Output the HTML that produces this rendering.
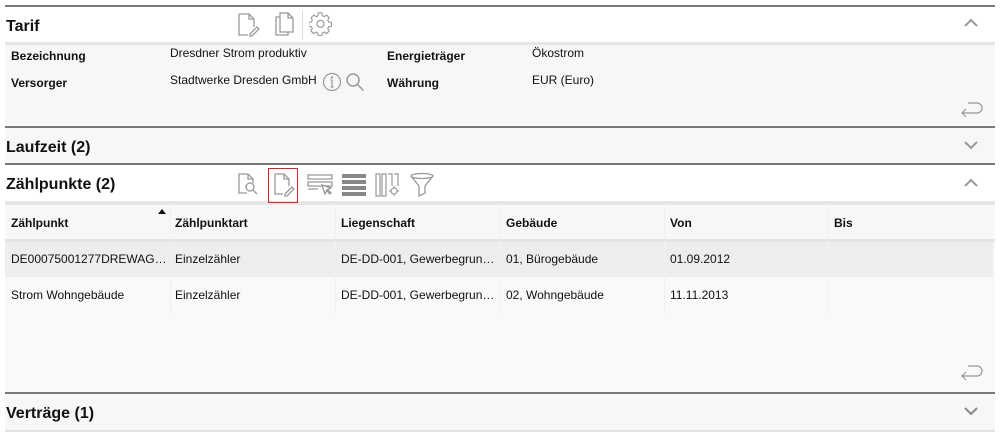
<!DOCTYPE html>
<html><head><meta charset="utf-8"><style>
*{margin:0;padding:0;box-sizing:border-box}
body{width:1000px;height:435px;background:#fff;font-family:"Liberation Sans",Arial,sans-serif;color:#111;position:relative;overflow:hidden}
.a{position:absolute}
.dl{position:absolute;left:5px;width:990px;height:2px;background:#777}
.h{position:absolute;left:5px;width:990px;font-weight:bold;font-size:16px}
.h span{position:absolute;left:1px}
.lbl{position:absolute;font-size:12px;font-weight:bold}
.val{position:absolute;font-size:12px}
.th{position:absolute;font-size:12px;font-weight:bold;top:216px}
.td{position:absolute;font-size:12px}
svg{position:absolute}
</style></head><body>
<div class="dl" style="top:5px"></div>
<div class="h" style="top:7px;height:36px;background:#fff"><span style="top:11px">Tarif</span></div>
<div class="a" style="left:5px;top:42px;width:990px;height:3px;background:#e6e6e6"></div>
<div class="a" style="left:5px;top:45px;width:990px;height:80px;background:#f7f7f7"></div>
<svg style="left:236px;top:12px" width="26" height="26" viewBox="0 0 26 26" fill="none" stroke="#999" stroke-width="1.3"><path d="M3 2h10l5 5v8M18 7h-5V2M3 2v21h9"/><path d="M14 22l7-7 2 2-7 7h-2z"/></svg>
<svg style="left:273px;top:11px" width="22" height="26" viewBox="0 0 22 26" fill="none" stroke="#999" stroke-width="1.3"><path d="M7 2h8l5 5v14H7z M15 2v5h5 M7 6H3v18h12v-3"/></svg>
<div class="a" style="left:302px;top:11px;width:1px;height:29px;background:#ddd"></div>
<svg style="left:309px;top:12px" width="24" height="24" viewBox="0 0 24 24" fill="none" stroke="#999" stroke-width="1.2"><path d="M10 2h4l.6 3 2 1 2.6-1.6 2.8 2.8L20.4 9.8l1 2 3 .6v4l-3 .6-1 2 1.6 2.6-2.8 2.8-2.6-1.6-2 1-.6 3h-4l-.6-3-2-1-2.6 1.6-2.8-2.8 1.6-2.6-1-2-3-.6v-4l3-.6 1-2L2.4 7.2l2.8-2.8L7.8 6l2-1z" transform="scale(.92) translate(0,-1)"/><circle cx="11.5" cy="11.8" r="3.5"/></svg>
<svg style="left:964px;top:18px" width="14" height="10" viewBox="0 0 14 10" fill="none" stroke="#999" stroke-width="2"><path d="M1 8l6-6 6 6"/></svg>
<div class="lbl" style="left:11px;top:49px">Bezeichnung</div>
<div class="val" style="left:170px;top:46px">Dresdner Strom produktiv</div>
<div class="lbl" style="left:387px;top:49px">Energieträger</div>
<div class="val" style="left:532px;top:46px">Ökostrom</div>
<div class="lbl" style="left:11px;top:76px">Versorger</div>
<div class="val" style="left:170px;top:73px">Stadtwerke Dresden GmbH</div>
<svg style="left:322px;top:72px" width="20" height="20" viewBox="0 0 20 20" fill="none" stroke="#999" stroke-width="1.2"><circle cx="10" cy="10" r="8.5"/><path d="M10 8v7M8.5 15h3M8.5 8h1.5"/><circle cx="10" cy="5.5" r=".6" fill="#999"/></svg>
<svg style="left:345px;top:72px" width="20" height="20" viewBox="0 0 20 20" fill="none" stroke="#999" stroke-width="1.5"><circle cx="8" cy="8" r="6"/><path d="M12.5 12.5l6 6"/></svg>
<div class="lbl" style="left:387px;top:76px">Währung</div>
<div class="val" style="left:532px;top:73px">EUR (Euro)</div>
<svg style="left:960px;top:101px" width="24" height="18" viewBox="0 0 24 18" fill="none" stroke="#999" stroke-width="1.2"><path d="M8 2h9a5 5 0 0 1 0 10H2M6 8l-4 4 4 4"/></svg>
<div class="dl" style="top:126px"></div>
<div class="h" style="top:128px;height:35px;background:#f7f7f7"><span style="top:11px">Laufzeit (2)</span></div>
<svg style="left:964px;top:140px" width="14" height="10" viewBox="0 0 14 10" fill="none" stroke="#999" stroke-width="2"><path d="M1 2l6 6 6-6"/></svg>
<div class="dl" style="top:163px"></div>
<div class="h" style="top:165px;height:36px;background:#fff"><span style="top:11px">Zählpunkte (2)</span></div>
<svg style="left:237px;top:172px" width="24" height="24" viewBox="0 0 24 24" fill="none" stroke="#999" stroke-width="1.3"><path d="M10 21H2V2h9l5 5v4M16 7h-5V2"/><circle cx="13" cy="15" r="4"/><path d="M16 18l4 4"/></svg>
<svg style="left:307px;top:173px" width="26" height="22" viewBox="0 0 26 22" fill="none" stroke="#999" stroke-width="1.3"><path d="M1 2h24v4H1zM1 9h24v4H1zM1 16h10"/><path d="M15 12l3 9 1.5-3.5 3.5 3.5 1-1-3.5-3.5L24 15z" fill="#fff"/></svg>
<svg style="left:341px;top:173px" width="26" height="24" viewBox="0 0 26 24"><g fill="#888"><rect x="1" y="1" width="24" height="4"/><rect x="1" y="7" width="24" height="4"/><rect x="1" y="13" width="24" height="4"/><rect x="1" y="19" width="24" height="4"/></g></svg>
<svg style="left:375px;top:173px" width="26" height="24" viewBox="0 0 26 24" fill="none" stroke="#999" stroke-width="1.2"><path d="M1 1h4v22H1zM7 1h4v22H7zM13 1h4v12M19 1h4v12"/><circle cx="19" cy="18" r="3"/><path d="M19 13v2M19 21v2M14 18h2M22 18h2"/></svg>
<svg style="left:409px;top:172px" width="26" height="26" viewBox="0 0 26 26" fill="none" stroke="#999" stroke-width="1.3"><ellipse cx="13" cy="4" rx="11" ry="2.5"/><path d="M2 4l8 10v10l6-3v-7l8-10"/></svg>
<svg style="left:964px;top:178px" width="14" height="10" viewBox="0 0 14 10" fill="none" stroke="#999" stroke-width="2"><path d="M1 8l6-6 6 6"/></svg>
<div class="a" style="left:5px;top:201px;width:990px;height:4px;background:#e6e6e6"></div>
<svg style="left:272px;top:172px" width="24" height="26" viewBox="0 0 24 26" fill="none" stroke="#999" stroke-width="1.3"><path d="M3 2h9l5 5v7M17 7h-5V2M3 2v20h8"/><path d="M13 22l7-7 2 2-7 7h-2z"/></svg>
<div class="a" style="left:268px;top:168px;width:30px;height:35px;border:1.5px solid #e02020"></div>
<div class="a" style="left:5px;top:205px;width:990px;height:187px;background:#f9f9f9"></div>
<div class="a" style="left:5px;top:205px;width:990px;height:35px;background:#f7f7f7"></div>
<div class="a" style="left:5px;top:239px;width:990px;height:3px;background:#e4e4e4"></div>
<div class="a" style="left:5px;top:242px;width:988px;height:35px;background:#ededed"></div>
<div class="a" style="left:5px;top:277px;width:988px;height:36px;background:#f9f9f9"></div>
<div class="a" style="left:170px;top:205px;width:1px;height:108px;background:#efefef"></div>
<div class="a" style="left:335px;top:205px;width:1px;height:108px;background:#efefef"></div>
<div class="a" style="left:500px;top:205px;width:1px;height:108px;background:#efefef"></div>
<div class="a" style="left:664px;top:205px;width:1px;height:108px;background:#efefef"></div>
<div class="a" style="left:828px;top:205px;width:1px;height:108px;background:#efefef"></div>
<div class="th" style="left:11px">Zählpunkt</div>
<svg style="left:158px;top:209px" width="8" height="5" viewBox="0 0 8 5"><path d="M0 5L4 0 8 5z" fill="#111"/></svg>
<div class="th" style="left:175px">Zählpunktart</div>
<div class="th" style="left:341px">Liegenschaft</div>
<div class="th" style="left:506px">Gebäude</div>
<div class="th" style="left:670px">Von</div>
<div class="th" style="left:834px">Bis</div>
<div class="td" style="left:11px;top:252px">DE00075001277DREWAG…</div>
<div class="td" style="left:175px;top:252px">Einzelzähler</div>
<div class="td" style="left:341px;top:252px">DE-DD-001, Gewerbegrun…</div>
<div class="td" style="left:506px;top:252px">01, Bürogebäude</div>
<div class="td" style="left:670px;top:252px">01.09.2012</div>
<div class="td" style="left:11px;top:288px">Strom Wohngebäude</div>
<div class="td" style="left:175px;top:288px">Einzelzähler</div>
<div class="td" style="left:341px;top:288px">DE-DD-001, Gewerbegrun…</div>
<div class="td" style="left:506px;top:288px">02, Wohngebäude</div>
<div class="td" style="left:670px;top:288px">11.11.2013</div>
<svg style="left:960px;top:364px" width="24" height="18" viewBox="0 0 24 18" fill="none" stroke="#999" stroke-width="1.2"><path d="M8 2h9a5 5 0 0 1 0 10H2M6 8l-4 4 4 4"/></svg>
<div class="dl" style="top:392px"></div>
<div class="h" style="top:394px;height:36px;background:#f7f7f7"><span style="top:11px">Verträge (1)</span></div>
<svg style="left:964px;top:406px" width="14" height="10" viewBox="0 0 14 10" fill="none" stroke="#888" stroke-width="2"><path d="M1 2l6 6 6-6"/></svg>
<div class="a" style="left:5px;top:430px;width:990px;height:2px;background:#e2e2e2"></div>
</body></html>
